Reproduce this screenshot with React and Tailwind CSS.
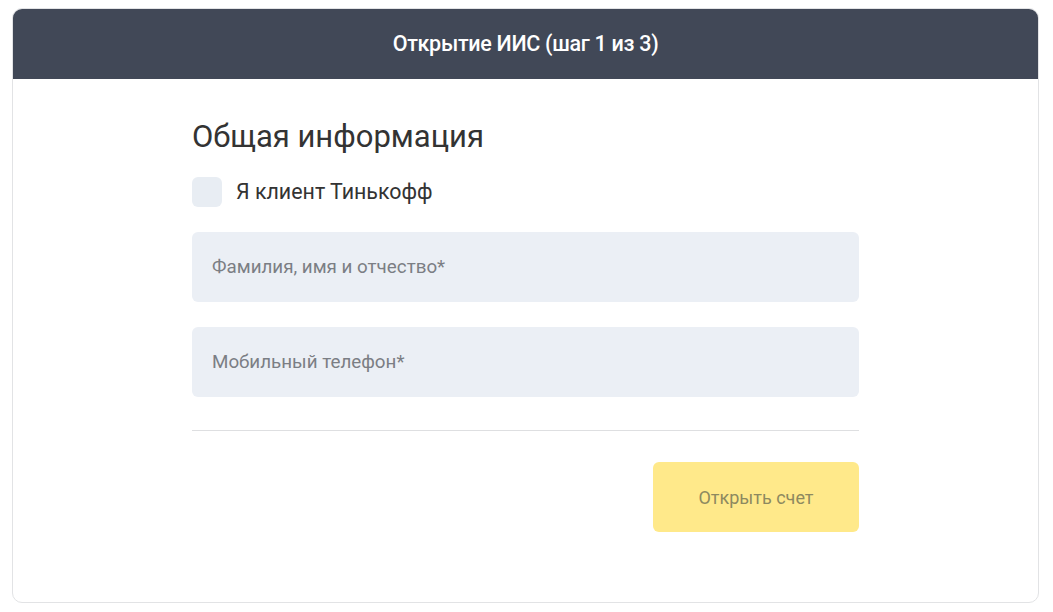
import React from "react";

function Field({ placeholder }) {
  return (
    <input
      type="text"
      placeholder={placeholder}
      className="w-full h-[70px] rounded-md bg-[#ebeff5] px-5 text-[18.8px] text-[#333] placeholder-[#7b7e84] outline-none"
    />
  );
}

export default function App() {
  return (
    <div className="min-h-screen bg-white pt-[8px] pb-[9px] font-['Roboto',sans-serif] text-[#333]">
      <div className="ml-[12px] w-[1027px] h-[595px] rounded-[10px] border border-[#e2e3e5] overflow-hidden flex flex-col">
        <div className="h-[70px] bg-[#414857] flex items-center justify-center">
          <h2 className="text-[21.5px] font-medium text-white tracking-[-0.3px]">
            Открытие ИИС (шаг 1 из 3)
          </h2>
        </div>

        <div className="w-[667px] mx-auto pt-[39px]">
          <h1 className="text-[31px] leading-[38px] text-[#333]">Общая информация</h1>

          <label className="mt-[20px] flex items-center gap-[14px] cursor-pointer">
            <span className="w-[30px] h-[30px] rounded-md bg-[#e8edf3]" />
            <span className="text-[21.4px] text-[#333]">Я клиент Тинькофф</span>
          </label>

          <div className="mt-[24px] flex flex-col gap-[25px]">
            <Field placeholder="Фамилия, имя и отчество*" />
            <Field placeholder="Мобильный телефон*" />
          </div>

          <div className="mt-[33px] border-t border-[#dedfe1]" />

          <div className="mt-[31px] flex justify-end">
            <button
              type="button"
              className="w-[206px] h-[70px] rounded-md bg-[#ffe98a] text-[18px] text-[#8d8960]"
            >
              Открыть счет
            </button>
          </div>
        </div>
      </div>
    </div>
  );
}
